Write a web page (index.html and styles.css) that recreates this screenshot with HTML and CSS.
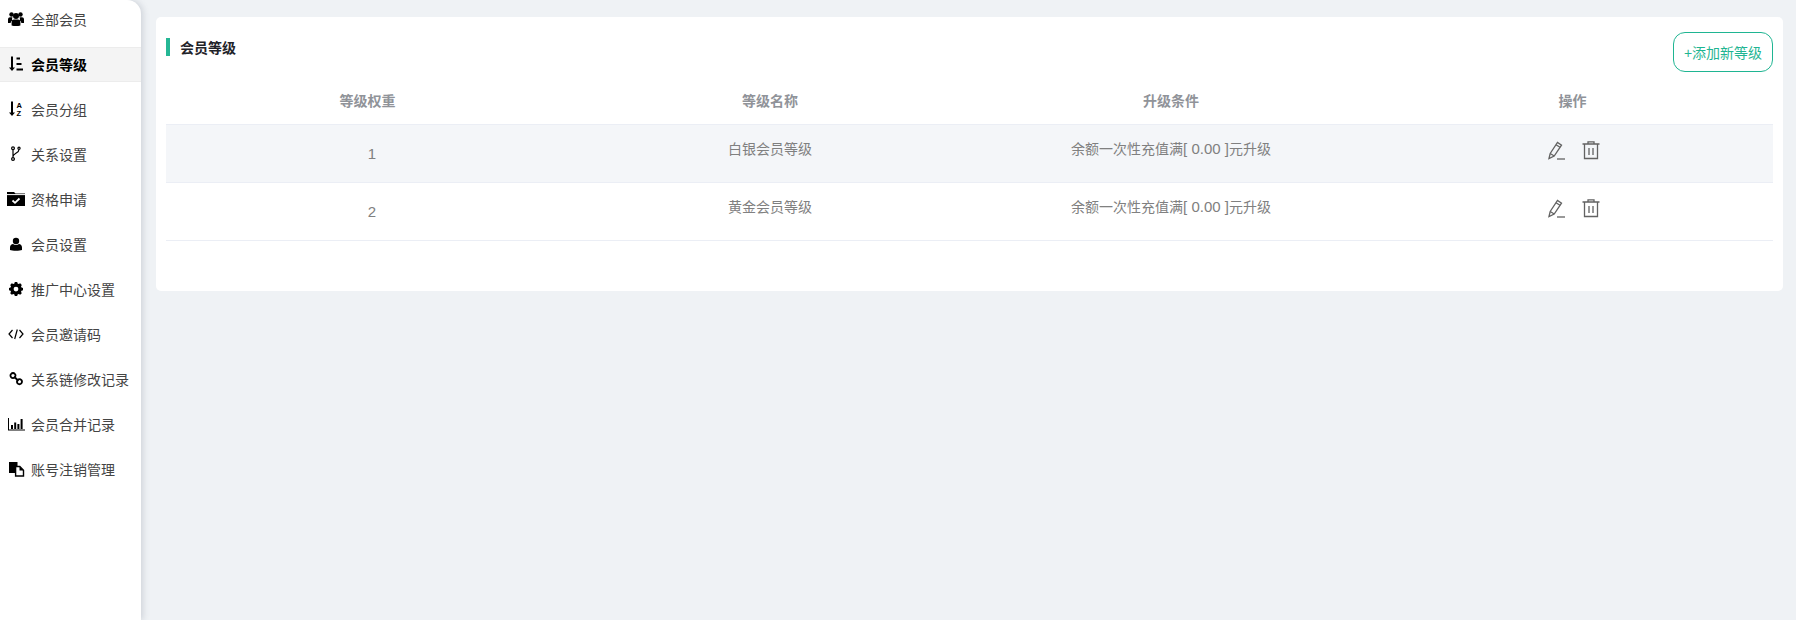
FILE: index.html
```html
<!DOCTYPE html>
<html lang="zh-CN">
<head>
<meta charset="utf-8">
<title>会员等级</title>
<link rel="stylesheet" href="styles.css">
</head>
<body>
<aside class="sidebar">
  <a class="nav-item"><svg class="nav-icon" viewBox="0 0 18 18"><circle cx="4.500" cy="4.500" r="2.200"/><circle cx="13.500" cy="4.500" r="2.200"/><circle cx="9" cy="6" r="3"/><path d="M1 13V9.500C1 8 2 7.300 3 7.300h2.500C5 8.500 5 9.500 5.300 10.500 4.200 11 3.700 12 3.700 13zM17 13V9.500C17 8 16 7.300 15 7.300h-2.500c.5 1.200.5 2.200.2 3.200 1.100.5 1.600 1.500 1.600 2.500zM4.600 15.500V12.500C4.600 10.800 5.700 9.500 7 9.500h4c1.300 0 2.400 1.300 2.400 3v3C11 16.200 7 16.200 4.600 15.500z"/></svg><span>全部会员</span></a>
  <a class="nav-item active"><svg class="nav-icon" viewBox="0 0 18 18"><path d="M4 1.500h2v11h2l-3 3.500-3-3.500h2zM9.500 2.500h3.500v2H9.500zM9.500 8h5v2h-5zM9.500 13.500h6.500v2H9.500z"/></svg><span>会员等级</span></a>
  <a class="nav-item"><svg class="nav-icon" viewBox="0 0 18 18"><path d="M4 1.500h2v11h2l-3 3.500-3-3.500h2z"/><text class="az" x="9.500" y="7.500">A</text><text class="az" x="9.500" y="15.500">Z</text></svg><span>会员分组</span></a>
  <a class="nav-item"><svg class="nav-icon" viewBox="0 0 18 18"><g class="line"><circle cx="6" cy="3.200" r="1.400"/><circle cx="6" cy="14" r="1.400"/><circle cx="12" cy="3.200" r="1.100"/><path d="M6 4.600v8M12 4.400c0 4-6 3.600-6 7.200"/></g></svg><span>关系设置</span></a>
  <a class="nav-item"><svg class="nav-icon" viewBox="0 0 18 18"><path d="M0 2h7l1.500 1.500H18V16H0z"/><path class="cut" d="M0 4.600h18"/><path class="check" d="M5.500 10.500l2.500 2.300 4.500-4.300"/></svg><span>资格申请</span></a>
  <a class="nav-item"><svg class="nav-icon" viewBox="0 0 18 18"><circle cx="9" cy="6" r="3.200"/><path d="M3 15v-2.500C3 10.300 4.500 9 6 9c1.800 1.200 4.200 1.200 6 0 1.500 0 3 1.300 3 3.500V15c-2 .9-10 .9-12 0z"/></svg><span>会员设置</span></a>
  <a class="nav-item"><svg class="nav-icon" viewBox="0 0 18 18"><path fill-rule="evenodd" d="M7.800 3h2.400l.4 1.600 1.100.5 1.500-.8 1.600 1.600-.8 1.500.5 1.100L16 9v2.300l-1.500.4-.5 1.100.8 1.400-1.600 1.600-1.500-.8-1.100.5-.4 1.500H7.800l-.4-1.500-1.100-.5-1.500.8-1.600-1.600.8-1.400-.5-1.100L2 11.300V9l1.500-.5.500-1.100-.8-1.500 1.600-1.600 1.500.8 1.100-.5zM9 7.700a2.400 2.400 0 1 0 0 4.800 2.400 2.400 0 0 0 0-4.800z" transform="translate(0 -1)"/></svg><span>推广中心设置</span></a>
  <a class="nav-item"><svg class="nav-icon" viewBox="0 0 18 18"><g class="line"><path d="M5.500 5L2 9l3.500 4M12.500 5L16 9l-3.500 4M10.300 4.500L7.700 14"/></g></svg><span>会员邀请码</span></a>
  <a class="nav-item"><svg class="nav-icon" viewBox="0 0 18 18"><g class="thick"><path d="M7.800 3.800a2.400 2.400 0 0 0-3.600 0 2.400 2.400 0 0 0 0 3.500 2.400 2.400 0 0 0 3.500 0 2.400 2.400 0 0 0 .1-3.500zM14.300 10a2.400 2.400 0 0 0-3.600 0 2.400 2.400 0 0 0 0 3.500 2.400 2.400 0 0 0 3.500 0 2.400 2.400 0 0 0 .1-3.500zM7 6.500l4.500 4.500"/></g></svg><span>关系链修改记录</span></a>
  <a class="nav-item"><svg class="nav-icon" viewBox="0 0 18 18"><path d="M1 3h1v11.500h16v1H1zM4 10h2v4H4zM7.200 7.500h2V14h-2zM10.400 9h2v5h-2zM13.600 4h2v10h-2z"/></svg><span>会员合并记录</span></a>
  <a class="nav-item"><svg class="nav-icon" viewBox="0 0 18 18"><path d="M2 2h8.500v4H8v7H2z"/><path class="sheet" d="M8.600 6.500h4.200l3.700 3.700V16H8.600z"/><path d="M12.500 6.500v4h4z"/></svg><span>账号注销管理</span></a>
</aside>
<main class="content">
  <section class="card">
    <header class="card-head">
      <h2 class="card-title">会员等级</h2>
      <button class="add-btn">+添加新等级</button>
    </header>
    <table class="grade-table">
      <thead>
        <tr>
          <th class="col-a">等级权重</th>
          <th class="col-b">等级名称</th>
          <th class="col-c">升级条件</th>
          <th class="col-d">操作</th>
        </tr>
      </thead>
      <tbody>
        <tr class="striped">
          <td><div class="lowered">1</div></td>
          <td><div class="raised">白银会员等级</div></td>
          <td><div class="raised">余额一次性充值满<span class="num">[ 0.00 ]</span>元升级</div></td>
          <td class="col-d"><div class="actions">
            <svg class="act" viewBox="0 0 18 19"><g class="act-line"><path d="M1 17.500l1.200-5L9.500 1.500l4 2.600L6.200 15z"/><path d="M8 3.700l4 2.600M2.200 12.500L6.200 15"/><path d="M9 18h8"/></g></svg>
            <svg class="act" viewBox="0 0 18 19"><g class="act-line"><path d="M.5 3h17M6 3V.8h6V3M2.500 3v14.500h13V3M7 7v7M11 7v7"/></g></svg>
          </div></td>
        </tr>
        <tr>
          <td><div class="lowered">2</div></td>
          <td><div class="raised">黄金会员等级</div></td>
          <td><div class="raised">余额一次性充值满<span class="num">[ 0.00 ]</span>元升级</div></td>
          <td class="col-d"><div class="actions">
            <svg class="act" viewBox="0 0 18 19"><g class="act-line"><path d="M1 17.500l1.200-5L9.500 1.500l4 2.600L6.200 15z"/><path d="M8 3.700l4 2.600M2.200 12.500L6.200 15"/><path d="M9 18h8"/></g></svg>
            <svg class="act" viewBox="0 0 18 19"><g class="act-line"><path d="M.5 3h17M6 3V.8h6V3M2.500 3v14.500h13V3M7 7v7M11 7v7"/></g></svg>
          </div></td>
        </tr>
      </tbody>
    </table>
  </section>
</main>
</body>
</html>
```

FILE: styles.css
```css
* { box-sizing: border-box; }
html, body { margin: 0; height: 100%; }
body {
  display: flex;
  height: 620px;
  overflow: hidden;
  background: #eff2f5;
  font-family: "Liberation Sans", "Noto Sans CJK SC", sans-serif;
  font-size: 14px;
}
.sidebar {
  flex: none;
  width: 141px;
  height: 620px;
  padding-top: 2px;
  background: #fff;
  border-top-right-radius: 14px;
  box-shadow: 2px 0 6px rgba(90, 100, 120, 0.22);
  display: flex;
  flex-direction: column;
  gap: 10px;
}
.nav-item {
  display: flex;
  align-items: center;
  gap: 6px;
  height: 35px;
  padding-left: 7px;
  color: #444;
  white-space: nowrap;
}
.nav-item span { margin-top: -2px; }
.nav-item.active {
  background: #f4f4f4;
  border-top: 1px solid #ececec;
  border-bottom: 1px solid #ececec;
  color: #000;
  font-weight: 700;
}
.nav-item.active span { margin-top: -1px; }
.nav-icon { flex: none; width: 18px; height: 18px; fill: #000; margin-top: -2px; }
.az { font-family: "Liberation Sans", sans-serif; font-size: 7.5px; font-weight: 700; }
.line { fill: none; stroke: #000; stroke-width: 1.2; }
.thick { fill: none; stroke: #000; stroke-width: 1.8; }
.cut { fill: none; stroke: #fff; stroke-width: 1; }
.check { fill: none; stroke: #fff; stroke-width: 1.8; }
.sheet { fill: #fff; stroke: #000; stroke-width: 1.4; }
.content { flex: 1; min-width: 0; padding: 17px 13px 0 15px; }
.card {
  background: #fff;
  border-radius: 5px;
  padding: 15px 10px 50px;
}
.card-head { display: flex; justify-content: space-between; align-items: flex-start; height: 40px; }
.card-title {
  margin: 6px 0 0;
  padding-left: 10px;
  height: 18px;
  line-height: 20px;
  border-left: 4px solid #25b795;
  font-size: 14px;
  font-weight: 700;
  color: #1f2329;
}
.add-btn {
  width: 100px;
  height: 40px;
  padding: 0;
  border: 1px solid #1fb592;
  border-radius: 12px;
  background: #fff;
  color: #1fb592;
  font: inherit;
}
.grade-table { width: 100%; border-collapse: collapse; table-layout: fixed; }
.col-a { width: 412px; }
.col-b { width: 384px; }
.col-c { width: 418px; }
th {
  height: 52px;
  padding: 5px 0 0;
  color: #909399;
  font-weight: 700;
  border-bottom: 1px solid #ebeef5;
}
th.col-a { padding-right: 9px; }
td {
  height: 58px;
  padding: 0;
  text-align: center;
  color: #808080;
  border-bottom: 1px solid #ebeef5;
}
th.col-d { padding-right: 8px; }
td.col-d { padding-right: 6px; }
.striped td { background: #f4f6f9; }
.raised { padding-bottom: 11px; }
.lowered { padding-top: 1px; font-size: 15px; }
.num { font-size: 15px; }
.actions { display: flex; justify-content: center; gap: 16px; padding-bottom: 5px; }
.act { width: 18px; height: 19px; }
.act-line { fill: none; stroke: #626262; stroke-width: 1.3; }
```
